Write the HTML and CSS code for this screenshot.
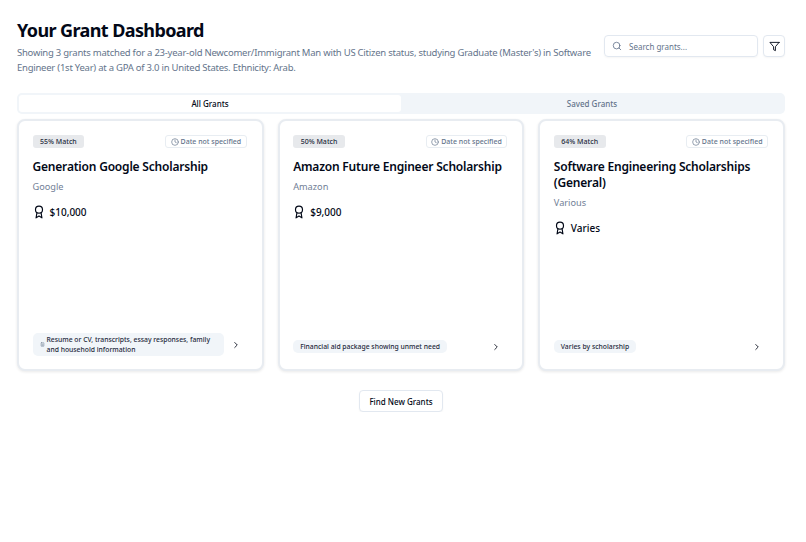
FILE: index.html
```html
<!DOCTYPE html>
<html lang="en">
<head>
<meta charset="utf-8">
<title>Your Grant Dashboard</title>
<link rel="stylesheet" href="styles.css">
</head>
<body>
<main class="page">
  <header class="header">
    <div class="intro">
      <h1 class="title">Your Grant Dashboard</h1>
      <p class="subtitle">Showing 3 grants matched for a 23-year-old Newcomer/Immigrant Man with US Citizen status, studying Graduate (Master's) in Software Engineer (1st Year) at a GPA of 3.0 in United States. Ethnicity: Arab.</p>
    </div>
    <div class="tools">
      <div class="search">
        <svg class="search-icon" viewBox="0 0 24 24"><circle cx="11" cy="11" r="8"/><path d="m21 21-4.3-4.3"/></svg>
        <span class="search-text">Search grants...</span>
      </div>
      <button class="filter"><svg viewBox="0 0 24 24"><path d="M22 3H2l8 9.46V19l4 2v-8.54L22 3z"/></svg></button>
    </div>
  </header>

  <nav class="tabs">
    <div class="tab active">All Grants</div>
    <div class="tab">Saved Grants</div>
  </nav>

  <section class="cards">
    <article class="card">
      <div class="card-top">
        <span class="match">55% Match</span>
        <span class="date"><svg viewBox="0 0 24 24"><circle cx="12" cy="12" r="10"/><path d="M12 6v6l4 2"/></svg>Date not specified</span>
      </div>
      <h2 class="name">Generation Google Scholarship</h2>
      <div class="org">Google</div>
      <div class="amount"><svg viewBox="0 0 24 24"><circle cx="12" cy="8" r="6"/><path d="M15.477 12.89 17 22l-5-3-5 3 1.523-9.11"/></svg>$10,000</div>
      <div class="card-foot">
        <span class="req"><svg class="doc" viewBox="0 0 24 24"><rect x="5" y="3" width="14" height="18" rx="2"/><path d="M9 9h6M9 13h6M9 17h6"/></svg><span>Resume or CV, transcripts, essay responses, family and household information</span></span>
        <svg class="chev" viewBox="0 0 24 24"><path d="m9 18 6-6-6-6"/></svg>
      </div>
    </article>
    <article class="card">
      <div class="card-top">
        <span class="match">50% Match</span>
        <span class="date"><svg viewBox="0 0 24 24"><circle cx="12" cy="12" r="10"/><path d="M12 6v6l4 2"/></svg>Date not specified</span>
      </div>
      <h2 class="name">Amazon Future Engineer Scholarship</h2>
      <div class="org">Amazon</div>
      <div class="amount"><svg viewBox="0 0 24 24"><circle cx="12" cy="8" r="6"/><path d="M15.477 12.89 17 22l-5-3-5 3 1.523-9.11"/></svg>$9,000</div>
      <div class="card-foot">
        <span class="req"><span>Financial aid package showing unmet need</span></span>
        <svg class="chev" viewBox="0 0 24 24"><path d="m9 18 6-6-6-6"/></svg>
      </div>
    </article>
    <article class="card">
      <div class="card-top">
        <span class="match">64% Match</span>
        <span class="date"><svg viewBox="0 0 24 24"><circle cx="12" cy="12" r="10"/><path d="M12 6v6l4 2"/></svg>Date not specified</span>
      </div>
      <h2 class="name">Software Engineering Scholarships (General)</h2>
      <div class="org">Various</div>
      <div class="amount"><svg viewBox="0 0 24 24"><circle cx="12" cy="8" r="6"/><path d="M15.477 12.89 17 22l-5-3-5 3 1.523-9.11"/></svg>Varies</div>
      <div class="card-foot">
        <span class="req"><span>Varies by scholarship</span></span>
        <svg class="chev" viewBox="0 0 24 24"><path d="m9 18 6-6-6-6"/></svg>
      </div>
    </article>
  </section>

  <div class="more"><button class="find">Find New Grants</button></div>
</main>
</body>
</html>
```
FILE: styles.css
```css
* { box-sizing: border-box; }
html, body { margin: 0; background: #fff; }
body { font-family: "Noto Sans", "Open Sans", sans-serif; color: #020817; overflow: hidden; }
svg { fill: none; stroke: currentColor; stroke-width: 2; stroke-linecap: round; stroke-linejoin: round; flex: none; display: block; }
.page { padding: 16px 21px 0 17px; width: 806px; }
.header { display: flex; justify-content: space-between; align-items: flex-start; gap: 8px; height: 61px; }
.intro { width: 582px; }
.title { margin: 1px 0 1.5px; font-size: 18px; line-height: 26px; font-weight: 700; letter-spacing: -0.6px; }
.subtitle { margin: 0; font-size: 9.5px; line-height: 15px; color: #64748b; letter-spacing: -0.24px; }
.tools { margin-top: 19px; display: flex; gap: 5px; }
.search { width: 154px; height: 22px; border: 1px solid #e2e8f0; border-radius: 4px; display: flex; align-items: center; padding-left: 7px; gap: 7px; box-shadow: 0 1px 2px rgba(0,0,0,.04); }
.search-icon { width: 10px; height: 10px; color: #64748b; }
.search-text { font-size: 8px; color: #64748b; }
.filter { width: 22px; height: 22px; padding: 0; border: 1px solid #e2e8f0; border-radius: 4px; background: #fff; display: flex; align-items: center; justify-content: center; color: #020817; box-shadow: 0 1px 2px rgba(0,0,0,.04); }
.filter svg { width: 11px; height: 11px; }
.tabs { margin-top: 16px; height: 21px; padding: 2px; border-radius: 5px; background: #f1f5f9; display: grid; grid-template-columns: 1fr 1fr; }
.tab { display: flex; align-items: center; justify-content: center; font-size: 8px; font-weight: 500; color: #64748b; border-radius: 3px; }
.tab.active { background: #fff; color: #020817; }
.cards { margin-top: 5px; display: grid; grid-template-columns: repeat(3, 1fr); gap: 14px; }
.card { height: 252px; border: 2px solid #e8ecf1; border-radius: 8px; background: #fff; padding: 14px 15px 13px 13.5px; display: flex; flex-direction: column; box-shadow: 0 1px 3px rgba(0,0,0,.09); }
.card-top { display: flex; justify-content: space-between; align-items: center; }
.match { height: 13px; padding: 0 7.5px; border-radius: 3px; background: #e7e9ec; font-size: 7px; font-weight: 500; line-height: 13px; color: #1e293b; }
.date { height: 13px; padding: 0 4.5px; border: 1px solid #e8edf2; border-radius: 3px; display: flex; align-items: center; gap: 2px; font-size: 7px; font-weight: 500; color: #64748b; }
.date svg { width: 8px; height: 8px; }
.name { margin: 10.5px 0 0; font-size: 12px; line-height: 16.5px; font-weight: 600; letter-spacing: -0.2px; }
.org { margin-top: 4.5px; font-size: 9.2px; line-height: 14px; color: #718096; }
.amount { margin-top: 10px; display: flex; align-items: center; gap: 4px; font-size: 10px; line-height: 16px; font-weight: 500; }
.amount svg { width: 14px; height: 14px; margin-left: -1px; }
.card-foot { margin-top: auto; min-height: 19px; display: flex; align-items: center; justify-content: space-between; gap: 7px; padding-right: 6px; }
.req { display: flex; align-items: center; gap: 2px; padding: 2px 7px; border-radius: 5px; background: #f1f5f9; font-size: 6.8px; line-height: 9.5px; font-weight: 500; color: #1e293b; }
.doc { width: 5px; height: 5px; color: #64748b; }
.chev { width: 10px; height: 10px; color: #020817; }
.more { margin-top: 19px; display: flex; justify-content: center; }
.find { height: 22px; padding: 0 9.5px; border: 1px solid #e2e8f0; border-radius: 4px; background: #fff; font-family: inherit; font-size: 8px; font-weight: 500; color: #020817; box-shadow: 0 1px 2px rgba(0,0,0,.04); }
```
